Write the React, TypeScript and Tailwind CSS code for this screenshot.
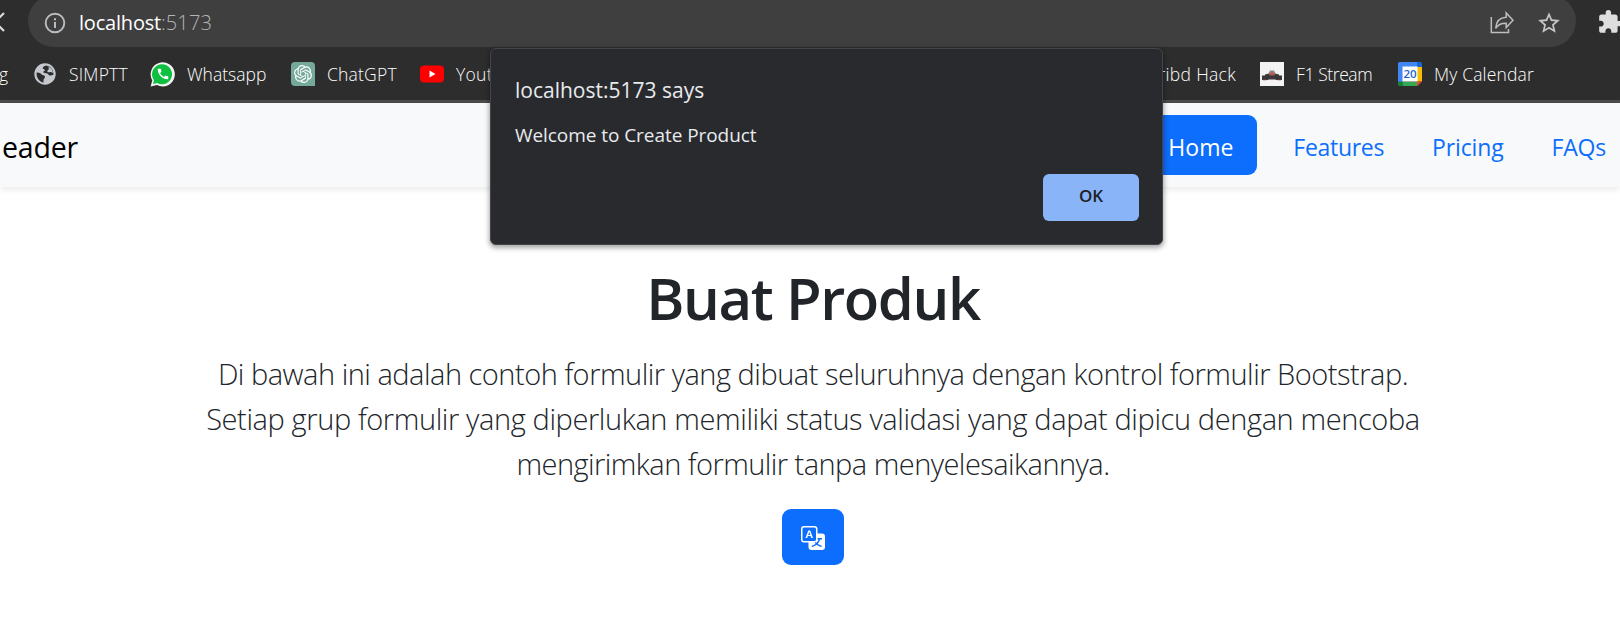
import type { ReactNode } from "react";
import { BsTranslate } from "react-icons/bs";
import { MdCall, MdExtension, MdStarBorder } from "react-icons/md";
import { SiOpenai } from "react-icons/si";

function GlobeIcon() {
  return (
    <svg viewBox="0 0 22 22" className="size-[22px]">
      <circle cx="11" cy="11" r="10.7" fill="#c4c8cd" />
      <path
        d="M2.6 9.6c2.2-.2 4.200.5 5 2 .6 1.200 2.600.4 3.300 1.600.5 1.200-.9 2.200-1.300 3.400-.3 1.200-.2 2.200.2 3-4.400-.4-7.700-4.800-7.200-10z"
        fill="#2d2d2d"
      />
      <path
        d="M12.200 2.500c-2 .3-3.600 1.600-3.400 2.900.2 1 2.300.7 2.200 1.900-.1 1-2 .8-1.700 2 .3 1.100 2.500.8 4 1.100 1.300.3 1.200 2 2.600 2.200 1.300.2 2.300-.9 3.500-.7.6-4.400-2.600-8.800-7.200-9.400z"
        fill="#2d2d2d"
      />
      <path d="M13.500 3.500c1 .4 1.700 1.500 1.300 2.600-.4 1-1.700 1.200-1.500 2.500.3 1 2 .6 3 .4.800 0 1.700.3 2.700.9-.2-3.200-2.300-5.700-5.500-6.400z" fill="#c4c8cd" />
    </svg>
  );
}

function WhatsappIcon() {
  return (
    <span className="grid size-[25px] place-items-center">
      <svg viewBox="0 0 25 25" className="col-start-1 row-start-1 size-[25px]">
        <path d="M.6 24.500 2.300 18.500A12.100 12.100 0 1 1 7 23z" fill="#f4f4f4" />
        <path d="M2.900 22.100 4 18.200A10 10 0 1 1 7.200 21z" fill="#0fbf3f" />
      </svg>
      <MdCall className="col-start-1 row-start-1 size-[14px] text-white" />
    </span>
  );
}

function YoutubeIcon() {
  return (
    <svg viewBox="0 0 24 18" className="h-[18px] w-6">
      <rect y=".5" width="24" height="17" rx="4" fill="#f00" />
      <path d="M9.500 5.500 15.500 9l-6 3.500z" fill="#fff" />
    </svg>
  );
}

function RaceCarIcon() {
  return (
    <svg viewBox="0 0 24 24" className="size-6">
      <rect width="24" height="24" fill="#f3f3f3" />
      <path d="M10 8.500h4l1.500 3h-7z" fill="#8d8585" />
      <path d="M2 13.500h3v-1l4-1h6l4 1v1h3v4.500h-5.500l-1.500-.6H9l-1.500.6H2z" fill="#39363a" />
      <path d="M8.500 12h7l-1 1.500h-5z" fill="#a65550" />
      <circle cx="12" cy="11.300" r="1.400" fill="#d2584f" />
      <path d="M3 17.800h3.500M17.500 17.800H21" stroke="#913535" strokeWidth=".8" />
    </svg>
  );
}

function CalendarIcon() {
  return (
    <svg viewBox="0 0 24 24" className="size-6">
      <path d="M1.500 0H19v5H5v15H0V1.500A1.500 1.500 0 0 1 1.500 0z" fill="#4285f4" />
      <path d="M19 0h3.500A1.500 1.500 0 0 1 24 1.500V5h-5z" fill="#1967d2" />
      <path d="M19 5h5v14.500h-5z" fill="#fbbc04" />
      <path d="M5 19.500h14V24H5z" fill="#34a853" />
      <path d="M0 19.500h5V24H1.500A1.500 1.500 0 0 1 0 22.500z" fill="#188038" />
      <path d="M19 19.500h5L19.500 24H19z" fill="#ea4335" />
      <path d="M4.500 4.500h15v15h-15z" fill="#fff" />
      <text x="12" y="16.300" textAnchor="middle" fontFamily="Open Sans, sans-serif" fontSize="11.500" fontWeight="600" letterSpacing="-.2" fill="#1c63d6">
        20
      </text>
    </svg>
  );
}

function Bookmark({ icon, children, className }: { icon?: ReactNode; children: string; className: string }) {
  return (
    <div className="flex shrink-0 items-center">
      {icon}
      <span className={className}>{children}</span>
    </div>
  );
}

function AddressBar() {
  return (
    <div className="flex h-[47px] items-start">
      <svg viewBox="0 0 28 47" className="h-[47px] w-7 shrink-0">
        <path d="M-14 13 4 31M4 13-14 31" stroke="#dcdcdc" strokeWidth="2.200" />
      </svg>
      <div className="-mt-[5px] flex h-[52px] w-[1548px] shrink-0 items-center rounded-full bg-[#3f3f3f] pt-[3px]">
        <svg viewBox="0 0 22 22" className="ml-[16px] size-[22px] text-[#b9bcc0]" fill="none" stroke="currentColor">
          <circle cx="11" cy="11" r="9.300" strokeWidth="1.900" />
          <path d="M11 10v6M11 6.200v2" strokeWidth="2" />
        </svg>
        <span className="ml-[13px] text-[20px] tracking-[-0.200px] text-white">localhost</span>
        <span className="text-[20px] font-light tracking-[0.100px] text-[#b4b4b4]">:5173</span>
        <svg viewBox="0 0 24 24" className="ml-auto size-6 text-[#bdbdbd]" fill="none" stroke="currentColor" strokeWidth="1.500">
          <path d="M1.300 6v15.500H18.500V18" />
          <path d="M16.200 2v4.300C9.800 6.600 6.200 10 5.700 17.300c2.300-3.600 5.600-5.200 10.500-5v4.200L23 9.300z" />
        </svg>
        <MdStarBorder className="mr-[14px] ml-[22px] size-[26px] text-[#c6c6c6]" />
      </div>
      <MdExtension className="mt-[9px] ml-[21px] size-[26px] shrink-0 text-[#dedede]" />
    </div>
  );
}

function BookmarksBar() {
  return (
    <div className="flex h-[53px] justify-between pt-px text-[17.500px] font-light whitespace-nowrap text-white">
      <div className="flex items-center">
        <Bookmark className="-ml-[1px] w-[35px]">g</Bookmark>
        <Bookmark icon={<GlobeIcon />} className="ml-[13px] w-[81px] tracking-[0.200px]">SIMPTT</Bookmark>
        <Bookmark icon={<WhatsappIcon />} className="ml-[12px] w-[104px]">Whatsapp</Bookmark>
        <Bookmark
          icon={
            <span className="flex size-6 items-center justify-center rounded-[4px] rounded-br-none bg-[#74a99b]">
              <SiOpenai className="size-[18px] text-white" />
            </span>
          }
          className="ml-[12px] w-[93px] tracking-[0.200px]"
        >
          ChatGPT
        </Bookmark>
        <Bookmark icon={<YoutubeIcon />} className="ml-[12px] tracking-[0.300px]">Yout</Bookmark>
      </div>
      <div className="flex items-center pr-[86px]">
        <Bookmark className="mr-[24px] tracking-[0.300px]">ribd Hack</Bookmark>
        <Bookmark icon={<RaceCarIcon />} className="mr-[25px] ml-[12px] w-[77px] tracking-[-0.400px]">F1 Stream</Bookmark>
        <Bookmark icon={<CalendarIcon />} className="ml-[12px] w-[100px] tracking-[0.150px]">My Calendar</Bookmark>
      </div>
    </div>
  );
}

function SiteHeader() {
  return (
    <header className="flex h-[84px] items-center justify-between bg-[#f8f9fa] shadow-[0_3px_6px_rgba(0,0,0,0.075)]">
      <span className="ml-[2px] pt-[4px] text-[28.500px] leading-[40px] tracking-[-0.200px] text-black">eader</span>
      <nav className="flex items-center pr-[14px] text-[23px] leading-[36px] text-[#0d6efd]">
        <a className="flex h-[60px] items-center rounded-[9px] bg-[#0d6efd] px-6 pt-[3px] text-white">Home</a>
        <a className="ml-[36px] pt-[3px] tracking-[-0.300px]">Features</a>
        <a className="ml-[48px] pt-[3px] tracking-[-0.150px]">Pricing</a>
        <a className="ml-[48px] pt-[3px] tracking-[-0.200px]">FAQs</a>
      </nav>
    </header>
  );
}

function AlertDialog() {
  return (
    <div
      role="dialog"
      className="absolute top-[48px] left-[490px] flex h-[197px] w-[673px] flex-col rounded-[6px] border border-[#43454a] bg-[#292a2d] px-[24px] pt-[26px] shadow-[0_2px_5px_1px_rgba(0,0,0,0.35)]"
    >
      <h2 className="text-[21px] leading-[30px] text-[#e8eaed]">localhost:5173 says</h2>
      <p className="mt-[16px] text-[19px] leading-[28px] tracking-[-0.060px] text-[#e8eaed]">Welcome to Create Product</p>
      <button className="mt-[25px] -mr-px h-[47px] w-[96px] self-end rounded-[6px] bg-[#8ab4f8] pb-[3px] text-[17px] font-semibold text-[#202124]">OK</button>
    </div>
  );
}

export default function App() {
  return (
    <div className="relative h-[637px] w-[1620px] overflow-hidden bg-white font-['Open_Sans','Noto_Sans',sans-serif]">
      <div className="border-b-[3px] border-[#4b4b4b] bg-[#2d2d2d]">
        <AddressBar />
        <BookmarksBar />
      </div>
      <SiteHeader />
      <main className="flex flex-col items-center pt-[75px] pr-[-6px] text-center text-[#212529]">
        <h1 className="mr-[-6px] text-[58px] leading-[72px] font-semibold tracking-[-1.400px]">Buat Produk</h1>
        <div className="mt-[17px] mr-[-6px] text-[29px] leading-[45px] font-light whitespace-nowrap">
          <p className="tracking-[-0.490px]">Di bawah ini adalah contoh formulir yang dibuat seluruhnya dengan kontrol formulir Bootstrap.</p>
          <p className="tracking-[-0.390px]">Setiap grup formulir yang diperlukan memiliki status validasi yang dapat dipicu dengan mencoba</p>
          <p className="tracking-[-0.540px]">mengirimkan formulir tanpa menyelesaikannya.</p>
        </div>
        <button className="mt-[23px] mr-[-6px] flex h-[56px] w-[62px] items-center justify-center rounded-[9px] bg-[#0d6efd] text-white">
          <BsTranslate className="size-6 translate-y-[1px]" />
        </button>
      </main>
      <AlertDialog />
    </div>
  );
}
